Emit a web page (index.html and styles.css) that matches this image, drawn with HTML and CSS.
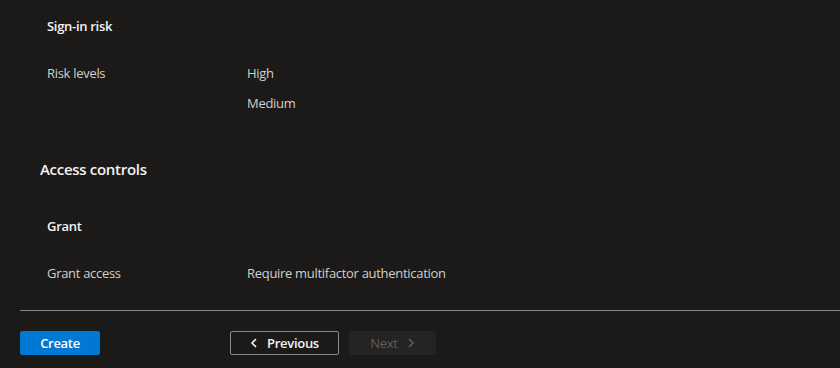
FILE: index.html
```html
<!DOCTYPE html>
<html lang="en">
<head>
    <meta charset="UTF-8">
    <meta name="viewport" content="width=device-width, initial-scale=1.0">
    <title>Review policy</title>
    <link rel="stylesheet" href="styles.css">
</head>
<body>
    <div class="content">
        <div class="group">
            <h3 class="group-title">Sign-in risk</h3>
            <div class="row">
                <div class="label">Risk levels</div>
                <div class="values">
                    <div>High</div>
                    <div>Medium</div>
                </div>
            </div>
        </div>

        <h2 class="section-title">Access controls</h2>

        <div class="group">
            <h3 class="group-title">Grant</h3>
            <div class="row">
                <div class="label">Grant access</div>
                <div class="values">
                    <div>Require multifactor authentication</div>
                </div>
            </div>
        </div>
    </div>

    <div class="footer">
        <button class="btn primary">Create</button>
        <div class="nav">
            <button class="btn outline">
                <svg width="8" height="10" viewBox="0 0 8 10"><polyline points="6,1 2,5 6,9" fill="none" stroke="currentColor" stroke-width="1.6"/></svg>
                Previous
            </button>
            <button class="btn disabled">
                Next
                <svg width="8" height="10" viewBox="0 0 8 10"><polyline points="2,1 6,5 2,9" fill="none" stroke="currentColor" stroke-width="1.6"/></svg>
            </button>
        </div>
    </div>
</body>
</html>
```

FILE: styles.css
```css
body {
    margin: 0;
    background-color: #1b1a19;
    color: #d2d0ce;
    font-family: "Open Sans", "Noto Sans", sans-serif;
    font-size: 13px;
    letter-spacing: -0.3px;
    height: 368px;
    overflow: hidden;
}
.content {
    padding: 16px 0 0 40px;
}
.group {
    padding-left: 7px;
}
.group-title {
    margin: 0 0 22px;
    font-size: 13px;
    line-height: 20px;
    font-weight: 600;
    color: #f3f2f1;
}
.row {
    display: flex;
}
.label {
    width: 200px;
    line-height: 30px;
}
.values div {
    line-height: 30px;
}
.section-title {
    margin: 40px 0 36px;
    font-size: 15px;
    line-height: 22px;
    font-weight: 600;
    color: #f3f2f1;
}
.footer {
    margin: 22px 0 0 20px;
    border-top: 1px solid #8a8886;
    padding-top: 20px;
    display: flex;
}
.btn {
    height: 24px;
    border-radius: 2px;
    font-family: inherit;
    font-size: 13px;
    letter-spacing: -0.3px;
    font-weight: 600;
    display: flex;
    align-items: center;
    justify-content: center;
    gap: 9px;
    border: 1px solid transparent;
    padding: 0;
}
.primary {
    width: 80px;
    background-color: #0078d4;
    color: #ffffff;
}
.nav {
    display: flex;
    gap: 10px;
    margin-left: 130px;
}
.outline {
    width: 109px;
    background-color: transparent;
    border-color: #8a8886;
    color: #f3f2f1;
}
.disabled {
    width: 87px;
    background-color: #252423;
    color: #5f5e5d;
    font-weight: 400;
}
```
